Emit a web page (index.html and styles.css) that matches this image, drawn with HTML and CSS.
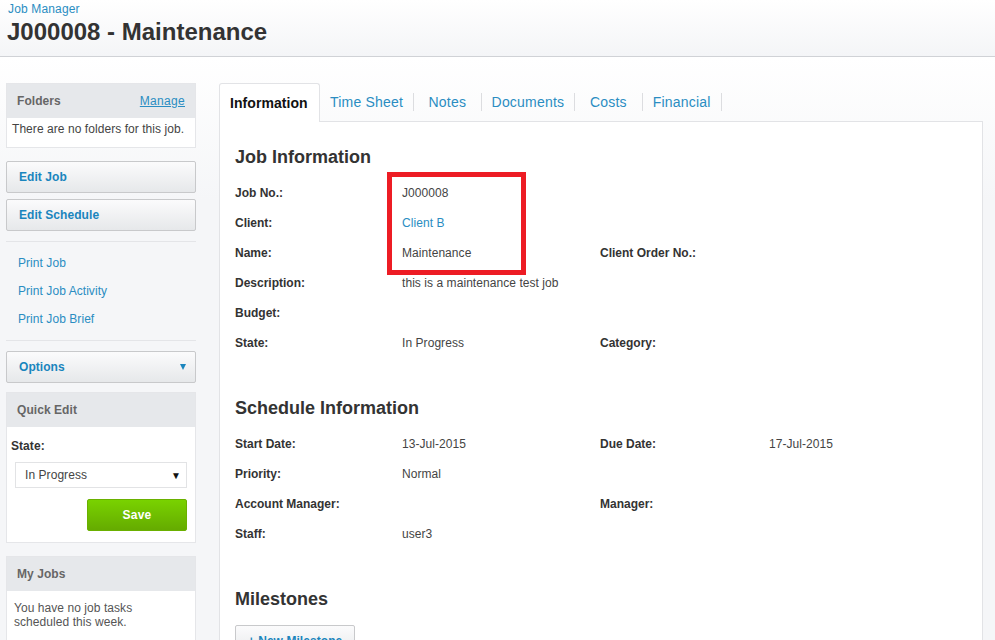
FILE: index.html
```html
<!DOCTYPE html>
<html lang="en">
<head>
<meta charset="utf-8">
<title>J000008 - Maintenance</title>
<link rel="stylesheet" href="styles.css">
</head>
<body>
<header class="page-head">
  <a class="crumb" href="#">Job Manager</a>
  <h1>J000008 - Maintenance</h1>
</header>
<div class="layout">
  <aside class="sidebar">
    <section class="box">
      <div class="box-head"><span>Folders</span><a href="#" class="manage">Manage</a></div>
      <p class="box-note">There are no folders for this job.</p>
    </section>
    <div class="actions">
      <a class="btn" href="#">Edit Job</a>
      <a class="btn" href="#">Edit Schedule</a>
    </div>
    <nav class="print-links">
      <a href="#">Print Job</a>
      <a href="#">Print Job Activity</a>
      <a href="#">Print Job Brief</a>
    </nav>
    <a class="btn btn-options" href="#"><span>Options</span><i class="caret"></i></a>
    <section class="box quick">
      <div class="box-head"><span>Quick Edit</span></div>
      <div class="quick-body">
        <div class="quick-label">State:</div>
        <div class="select"><span>In Progress</span><b>▼</b></div>
        <div class="save-row"><button class="save">Save</button></div>
      </div>
    </section>
    <section class="box myjobs">
      <div class="box-head"><span>My Jobs</span></div>
      <p class="jobs-note">You have no job tasks scheduled this week.</p>
    </section>
  </aside>
  <main class="content">
    <nav class="tabs">
      <a class="tab active" href="#">Information</a>
      <a class="tab" href="#">Time Sheet</a>
      <a class="tab" href="#">Notes</a>
      <a class="tab" href="#">Documents</a>
      <a class="tab" href="#">Costs</a>
      <a class="tab" href="#">Financial</a>
    </nav>
    <div class="panel">
      <h2>Job Information</h2>
      <div class="fields">
        <b>Job No.:</b><span>J000008</span><b></b><span></span>
        <b>Client:</b><span><a href="#">Client B</a></span><b></b><span></span>
        <b>Name:</b><span>Maintenance</span><b>Client Order No.:</b><span></span>
        <b>Description:</b><span>this is a maintenance test job</span><b></b><span></span>
        <b>Budget:</b><span></span><b></b><span></span>
        <b>State:</b><span>In Progress</span><b>Category:</b><span></span>
      </div>
      <h2 class="next">Schedule Information</h2>
      <div class="fields">
        <b>Start Date:</b><span>13-Jul-2015</span><b>Due Date:</b><span>17-Jul-2015</span>
        <b>Priority:</b><span>Normal</span><b></b><span></span>
        <b>Account Manager:</b><span></span><b>Manager:</b><span></span>
        <b>Staff:</b><span>user3</span><b></b><span></span>
      </div>
      <h2 class="next">Milestones</h2>
      <a class="btn btn-new" href="#">+ New Milestone</a>
    </div>
  </main>
</div>
<div class="highlight"></div>
</body>
</html>
```
FILE: styles.css
```css
* { box-sizing: border-box; }
html, body { height: 100%; }
body {
  margin: 0;
  height: 640px;
  overflow: hidden;
  position: relative;
  background: linear-gradient(#fff 57px, #f5f6f8 200px);
  color: #333;
  font: 12px/15px "Liberation Sans", Arial, sans-serif;
  letter-spacing: 0.06px;
}
a { color: #2a8dc2; text-decoration: none; }
.page-head {
  height: 57px;
  padding: 2px 8px 0;
  border-bottom: 1px solid #d0d2d6;
  background: linear-gradient(#fff, #f4f5f7);
}
.crumb { display: block; line-height: 15px; letter-spacing: 0.15px; }
h1 {
  margin: 0 0 0 -1px;
  font-size: 24px;
  line-height: 30px;
  font-weight: bold;
  color: #333;
  letter-spacing: 0;
}
.layout { display: flex; align-items: flex-start; }
.sidebar { width: 190px; margin: 26px 0 0 6px; flex: none; }
.box { border: 1px solid #e5e6e9; background: #fff; }
.box-head {
  display: flex;
  justify-content: space-between;
  height: 34px;
  padding: 10px 10px 0;
  background: #e6e8eb;
  color: #666;
  font-weight: bold;
}
.manage { font-weight: normal; text-decoration: underline; letter-spacing: 0.3px; }
.box-note { margin: 0; height: 29px; padding: 4px 5px 0; color: #444; }
.actions { margin-top: 13px; display: grid; gap: 6px; padding-bottom: 10px; border-bottom: 1px solid #e4e5e8; }
.btn {
  display: flex;
  justify-content: space-between;
  align-items: center;
  height: 32px;
  padding: 0 12px;
  border: 1px solid #c8c9cb;
  border-radius: 2px;
  background: linear-gradient(#fbfbfc, #e6e8ea);
  color: #1a85bd;
  font-weight: bold;
}
.print-links {
  display: grid;
  gap: 13px;
  padding: 14px 12px 13px;
  border-bottom: 1px solid #e4e5e8;
}
.btn-options { margin-top: 10px; }
.caret {
  width: 0;
  height: 0;
  border: 3.5px solid transparent;
  border-top: 6px solid #1a85bd;
  border-bottom: 0;
  margin-right: -3px;
}
.quick { margin-top: 9px; }
.quick-body { height: 115px; padding: 12px 4px 0; }
.quick-label { font-weight: bold; }
.select {
  display: flex;
  justify-content: space-between;
  align-items: center;
  height: 26px;
  margin: 8px 4px 0 4px;
  padding: 0 5px 0 9px;
  border: 1px solid #e2e3e5;
  color: #444;
}
.select b { font-size: 10px; color: #111; font-weight: normal; }
.save-row { display: flex; justify-content: flex-end; margin: 11px 4px 0 0; }
.save {
  width: 100px;
  height: 32px;
  border: 1px solid #6ab000;
  border-radius: 2px;
  background: linear-gradient(#79d200, #65ab00);
  color: #fff;
  font: bold 12px "Liberation Sans", Arial, sans-serif;
  letter-spacing: 0.2px;
}
.myjobs { margin-top: 13px; }
.jobs-note { margin: 0; height: 100px; padding: 10px 7px 0; line-height: 14px; color: #555; }
.content { margin: 26px 0 0 23px; width: 764px; flex: none; }
.tabs { display: flex; height: 39px; align-items: flex-start; }
.tab {
  margin-top: 10px;
  height: 18px;
  min-width: 67.5px;
  text-align: center;
  line-height: 18px;
  font-size: 14px;
  letter-spacing: 0.2px;
  padding: 0 10px;
  border-right: 1px solid #dcdde0;
}
.tab.active {
  margin-top: 0;
  width: 101px;
  height: 39px;
  line-height: 38px;
  padding: 0 0 0 10px;
  text-align: left;
  background: #fff;
  border: 1px solid #e2e3e6;
  border-bottom: 0;
  border-radius: 3px 3px 0 0;
  color: #111;
  font-size: 14px;
  font-weight: bold;
  letter-spacing: 0.06px;
  position: relative;
  z-index: 1;
}
.panel {
  background: #fff;
  border: 1px solid #e2e3e6;
  margin-top: -1px;
  padding: 24px 15px 0;
  height: 540px;
  color: #444;
}
h2 { margin: 0 0 18px; font-size: 18px; line-height: 22px; color: #333; font-weight: bold; letter-spacing: 0; }
h2.next { margin-top: 31px; }
.fields {
  display: grid;
  grid-template-columns: 167px 198px 169px 1fr;
  grid-auto-rows: 30px;
}
.fields b { color: #333; letter-spacing: 0; }
.btn-new { display: flex; width: 120px; height: 32px; margin-top: -3px; justify-content: center; white-space: nowrap; }
.highlight {
  position: absolute;
  left: 387px;
  top: 172px;
  width: 139px;
  height: 103px;
  border: 5px solid #ed1c24;
}
```
